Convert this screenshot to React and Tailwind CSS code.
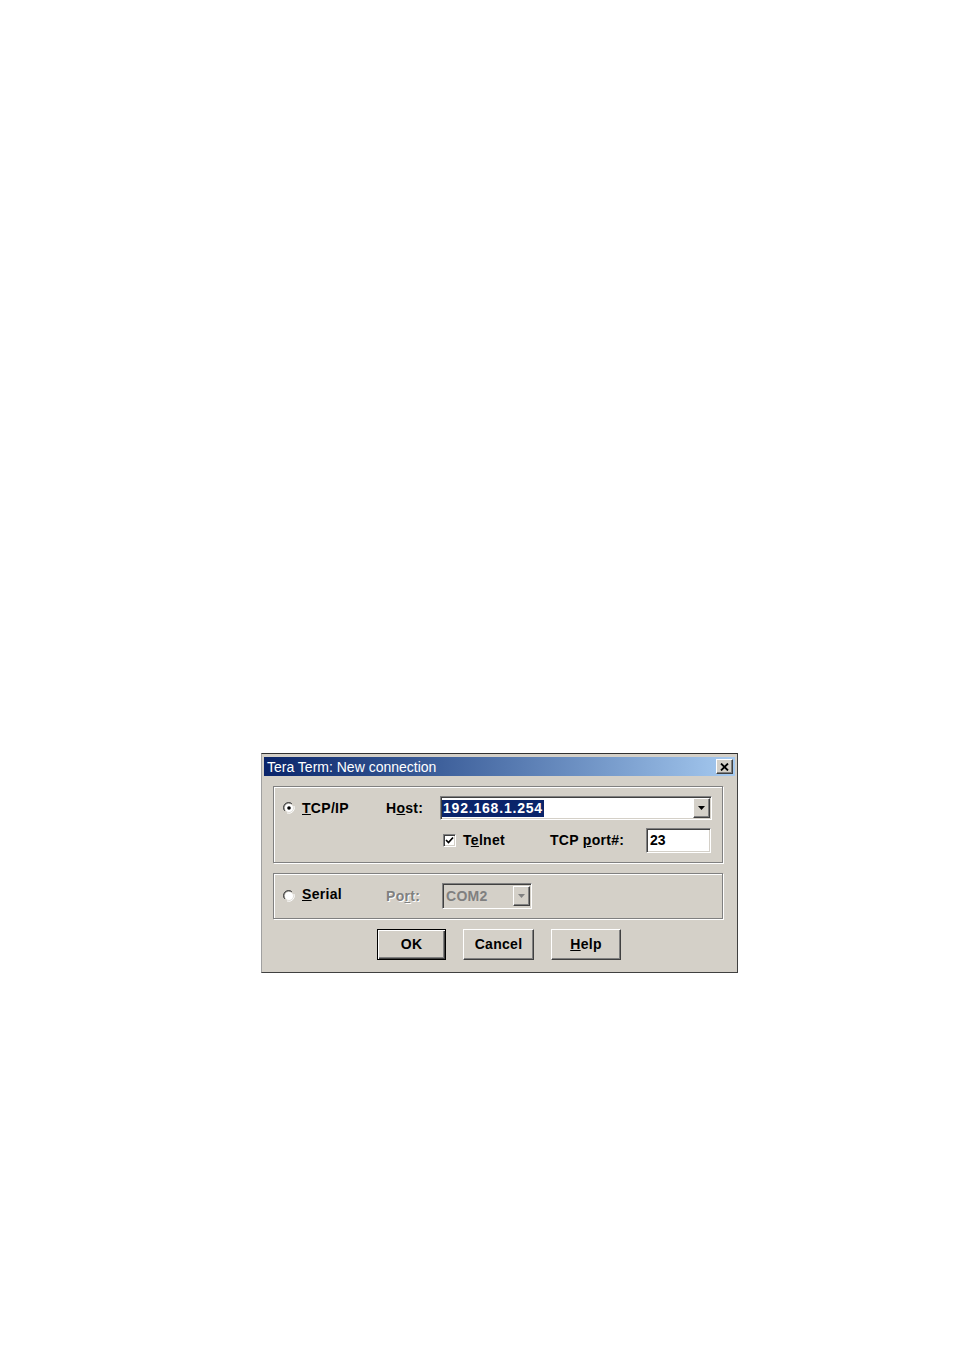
import React from 'react';

const font = { fontFamily: '"Liberation Sans", Arial, sans-serif' };

const raised =
  'border border-t-white border-l-white border-r-[#404040] border-b-[#404040] shadow-[inset_-1px_-1px_0_#808080,inset_1px_1px_0_#d4d0c8]';
const sunken =
  'border border-t-[#808080] border-l-[#808080] border-r-white border-b-white shadow-[inset_1px_1px_0_#404040,inset_-1px_-1px_0_#d4d0c8]';
const groupBox =
  'border border-[#808080] shadow-[inset_1px_1px_0_#fff,1px_1px_0_#fff]';

const Radio = ({ checked }) => (
  <svg width="12" height="12" viewBox="0 0 12 12" className="shrink-0">
    <path d="M1 8 A5.5 5.5 0 0 1 8 1" stroke="#808080" fill="none" />
    <path d="M2 9 A4.5 4.5 0 0 1 9 2" stroke="#404040" fill="none" />
    <path d="M4 11 A5.5 5.5 0 0 0 11 4" stroke="#ffffff" fill="none" />
    <circle cx="6" cy="6" r="4" fill="#ffffff" />
    {checked && <circle cx="6" cy="6" r="1.8" fill="#000000" />}
  </svg>
);

const Checkbox = () => (
  <div className={`w-[13px] h-[13px] bg-white ${sunken} flex items-center justify-center`}>
    <svg width="9" height="9" viewBox="0 0 9 9">
      <path d="M1 4 L3.5 6.5 L8 1.5" stroke="#000" strokeWidth="1.7" fill="none" />
    </svg>
  </div>
);

const Arrow = ({ color }) => (
  <svg width="7" height="4" viewBox="0 0 7 4">
    <path d="M0 0 H7 L3.5 4 Z" fill={color} />
  </svg>
);

const Button = ({ children, isDefault }) => (
  <div
    className={
      isDefault
        ? 'h-[31px] border border-black shadow-[inset_1px_1px_0_#fff,inset_-1px_-1px_0_#404040,inset_-2px_-2px_0_#808080] flex items-center justify-center'
        : `h-[31px] ${raised} flex items-center justify-center`
    }
  >
    <span className="text-[14px] font-bold tracking-[0.3px] text-black">{children}</span>
  </div>
);

const App = () => {
  return (
    <div className="w-[954px] h-[1351px] bg-white pt-[753px] pl-[261px]" style={font}>
      <div className="w-[477px] h-[220px] bg-[#d4d0c8] border border-t-[#303030] border-l-[#a0a0a0] border-r-[#404040] border-b-[#404040] px-[2px] pt-[3px] flex flex-col">
        {/* title bar */}
        <div className="h-[19px] bg-gradient-to-r from-[#0a246a] to-[#a6caf0] flex items-center justify-between pl-[3px] pr-[2px]">
          <span className="text-white text-[14px] leading-none">Tera Term: New connection</span>
          <div className={`w-[17px] h-[15px] bg-[#d4d0c8] ${raised} flex items-center justify-center`}>
            <svg width="9" height="8" viewBox="0 0 9 8">
              <path d="M1 0.5 L8 7.5 M8 0.5 L1 7.5" stroke="#000" strokeWidth="1.8" />
            </svg>
          </div>
        </div>

        {/* TCP/IP group */}
        <div className={`ml-[9px] mt-[10px] w-[450px] h-[77px] ${groupBox} flex flex-col`}>
          <div className="flex items-center mt-[9px] pl-[9px]">
            <Radio checked />
            <span className="ml-[7px] w-[84px] text-[14px] font-bold tracking-[0.3px] text-black">
              <span className="underline">T</span>CP/IP
            </span>
            <span className="w-[54px] text-[14px] font-bold tracking-[0.3px] text-black">
              H<span className="underline">o</span>st:
            </span>
            <div className={`w-[272px] h-[24px] bg-white ${sunken} flex items-center justify-between pl-[1px] pr-[1px]`}>
              <span className="bg-[#0a246a] text-white text-[14px] font-bold tracking-[0.8px] leading-[17px] px-[1px]">
                192.168.1.254
              </span>
              <div className={`w-[17px] h-[20px] bg-[#d4d0c8] ${raised} flex items-center justify-center`}>
                <Arrow color="#000" />
              </div>
            </div>
          </div>
          <div className="flex items-center mt-[8px] pl-[169px]">
            <Checkbox />
            <span className="ml-[7px] w-[87px] text-[14px] font-bold tracking-[0.3px] text-black">
              T<span className="underline">e</span>lnet
            </span>
            <span className="w-[96px] text-[14px] font-bold tracking-[0.3px] text-black">
              TCP <span className="underline">p</span>ort#:
            </span>
            <div className={`w-[65px] h-[25px] bg-white ${sunken} flex items-center pl-[3px]`}>
              <span className="text-[14px] font-bold text-black">23</span>
            </div>
          </div>
        </div>

        {/* Serial group */}
        <div className={`ml-[9px] mt-[10px] w-[450px] h-[46px] ${groupBox} flex items-center pl-[9px]`}>
          <Radio />
          <span className="ml-[7px] w-[84px] text-[14px] font-bold tracking-[0.3px] text-black -mt-[4px]">
            <span className="underline">S</span>erial
          </span>
          <span className="w-[56px] text-[14px] font-bold tracking-[0.3px] text-[#808080] [text-shadow:1px_1px_0_#fff]">
            Po<span className="underline">r</span>t:
          </span>
          <div className={`w-[90px] h-[26px] bg-[#d4d0c8] ${sunken} flex items-center justify-between pl-[3px] pr-[1px]`}>
            <span className="text-[14px] font-bold tracking-[0.3px] text-[#808080]">COM2</span>
            <div className={`w-[17px] h-[20px] bg-[#d4d0c8] ${raised} flex items-center justify-center`}>
              <Arrow color="#808080" />
            </div>
          </div>
        </div>

        {/* buttons */}
        <div className="flex mt-[10px] pl-[113px] gap-[17px]">
          <div className="w-[69px]">
            <Button isDefault>OK</Button>
          </div>
          <div className="w-[71px]">
            <Button>Cancel</Button>
          </div>
          <div className="w-[70px]">
            <Button>
              <span className="underline">H</span>elp
            </Button>
          </div>
        </div>
      </div>
    </div>
  );
};

export default App;
